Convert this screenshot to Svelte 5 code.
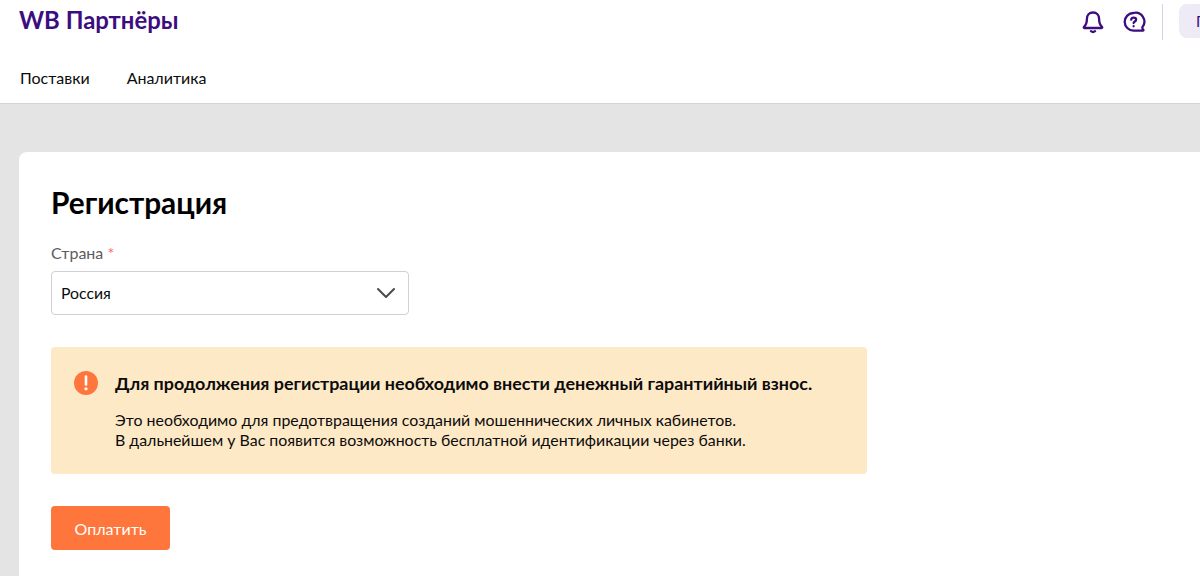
<script>
	const navItems = ['Поставки', 'Аналитика'];
</script>

<div class="page">
	<header class="header">
		<div class="top">
			<div class="logo">WB Партнёры</div>
			<div class="actions">
				<button class="icon-btn" aria-label="Уведомления">
					<svg width="24" height="24" viewBox="0 0 24 24" fill="none" stroke="#3c0d7f" stroke-width="2.300" stroke-linecap="round" stroke-linejoin="round">
						<path d="M12 2.500c-3.700 0-6.100 2.800-6.100 6.400 0 4-1 6.200-3 8.100-.4.400-.1 1 .4 1h17.400c.5 0 .8-.6.4-1-2-1.900-3-4.100-3-8.100 0-3.600-2.400-6.400-6.100-6.400z" />
						<path d="M10 21.200c1 .8 3 .8 4 0" />
					</svg>
				</button>
				<button class="icon-btn" aria-label="Помощь">
					<svg width="24" height="24" viewBox="0 0 24 24" fill="none" stroke="#3c0d7f" stroke-width="2.300" stroke-linecap="round" stroke-linejoin="round">
						<path d="M11.500 3a8.800 8.800 0 1 0 0 17.600h9.500c.4 0 .6-.4.300-.7-.9-.8-1.100-1.800-.8-3A8.800 8.800 0 0 0 11.500 3z" />
						<path d="M9.200 9.600c.2-1.300 1.100-2 2.400-2 1.400 0 2.500.9 2.500 2.100 0 1.800-2.500 1.800-2.500 3.400" />
						<path d="M11.600 16.200v.1" />
					</svg>
				</button>
				<div class="divider"></div>
				<div class="profile"><span class="profile-letter">П</span></div>
			</div>
		</div>
		<nav class="nav">
			{#each navItems as item}
				<span class="nav-item">{item}</span>
			{/each}
		</nav>
	</header>

	<main class="main">
		<section class="card">
			<h1 class="title">Регистрация</h1>
			<label class="label" for="country">Страна <span class="req">*</span></label>
			<div class="select" id="country">
				<span class="select-value">Россия</span>
				<svg width="20" height="12" viewBox="0 0 20 12" fill="none" stroke="#4a4a4a" stroke-width="2" stroke-linecap="round" stroke-linejoin="round">
					<path d="M2 2l8 8 8-8" />
				</svg>
			</div>

			<div class="notice">
				<svg class="notice-icon" width="24" height="24" viewBox="0 0 24 24">
					<circle cx="12" cy="12" r="12" fill="#ff763d" />
					<path d="M12 5.500v8" stroke="#fff" stroke-width="2.600" stroke-linecap="round" />
					<circle cx="12" cy="17.800" r="1.600" fill="#fff" />
				</svg>
				<div class="notice-body">
					<div class="notice-title">Для продолжения регистрации необходимо внести денежный гарантийный взнос.</div>
					<p class="notice-text">
						Это необходимо для предотвращения созданий мошеннических личных кабинетов.<br />
						В дальнейшем у Вас появится возможность бесплатной идентификации через банки.
					</p>
				</div>
			</div>

			<button class="pay">Оплатить</button>
		</section>
	</main>
</div>

<style>
	:global(body) {
		margin: 0;
		background: #e4e4e4;
		overflow: hidden;
	}

	.page {
		height: 576px;
		overflow: hidden;
		font-family: "Lato", "Open Sans", "Noto Sans", sans-serif;
		color: #0c0c0c;
	}

	.header {
		height: 104px;
		box-sizing: border-box;
		background: #fff;
		border-bottom: 1px solid #d4d3da;
		padding-left: 19px;
	}

	.top {
		display: flex;
		justify-content: space-between;
		height: 64px;
	}

	.logo {
		font-size: 23.9px;
		font-weight: 700;
		line-height: 28px;
		margin-top: 6px;
		color: #3c0d7f;
	}

	.actions {
		display: flex;
		align-items: flex-start;
		margin-top: 4px;
	}

	.icon-btn {
		width: 24px;
		height: 24px;
		padding: 0;
		margin-top: 6px;
		margin-right: 17px;
		border: 0;
		background: none;
	}

	.divider {
		width: 1px;
		height: 36px;
		background: #d8d0e8;
		margin-left: -1px;
		margin-right: 16px;
	}

	.profile {
		width: 21px;
		height: 34px;
		background: #eeeaf6;
		border-radius: 8px 0 0 8px;
		overflow: hidden;
		padding: 8px 0 0 17px;
		box-sizing: border-box;
	}

	.profile-letter {
		color: #3c0d7f;
		font-size: 15px;
		line-height: 18px;
		display: block;
	}

	.nav {
		display: flex;
		gap: 37px;
		padding-left: 1px;
	}

	.nav-item {
		font-size: 16px;
		line-height: 28px;
	}

	.main {
		padding: 48px 0 0 19px;
	}

	.card {
		background: #fff;
		border-radius: 8px 0 0 0;
		padding: 32px;
		height: 500px;
	}

	.title {
		margin: 0 0 22px;
		font-size: 29.8px;
		font-weight: 700;
		line-height: 37px;
		color: #000;
	}

	.label {
		display: block;
		font-size: 16px;
		line-height: 20px;
		color: #5c5c60;
		margin-bottom: 8px;
	}

	.req {
		color: #f66;
	}

	.select {
		width: 358px;
		height: 44px;
		box-sizing: border-box;
		border: 1px solid #cfcfd6;
		border-radius: 4px;
		padding: 0 12px 0 9px;
		display: flex;
		align-items: center;
		justify-content: space-between;
		font-size: 15.8px;
	}

	.select-value {
		padding-bottom: 1px;
	}

	.notice {
		width: 816px;
		height: 127px;
		margin-top: 32px;
		box-sizing: border-box;
		background: #fee9c6;
		border-radius: 4px;
		padding: 24px 23px;
		display: flex;
		gap: 17px;
	}

	.notice-icon {
		flex: none;
	}

	.notice-title {
		font-size: 17.9px;
		font-weight: 700;
		line-height: 24px;
	}

	.notice-text {
		margin: 15px 0 0;
		font-size: 15.92px;
		line-height: 20px;
	}

	.pay {
		display: block;
		margin-top: 32px;
		width: 119px;
		height: 44px;
		border: 0;
		border-radius: 4px;
		background: #ff763d;
		color: #fff;
		font-family: inherit;
		font-size: 16px;
	}
</style>
